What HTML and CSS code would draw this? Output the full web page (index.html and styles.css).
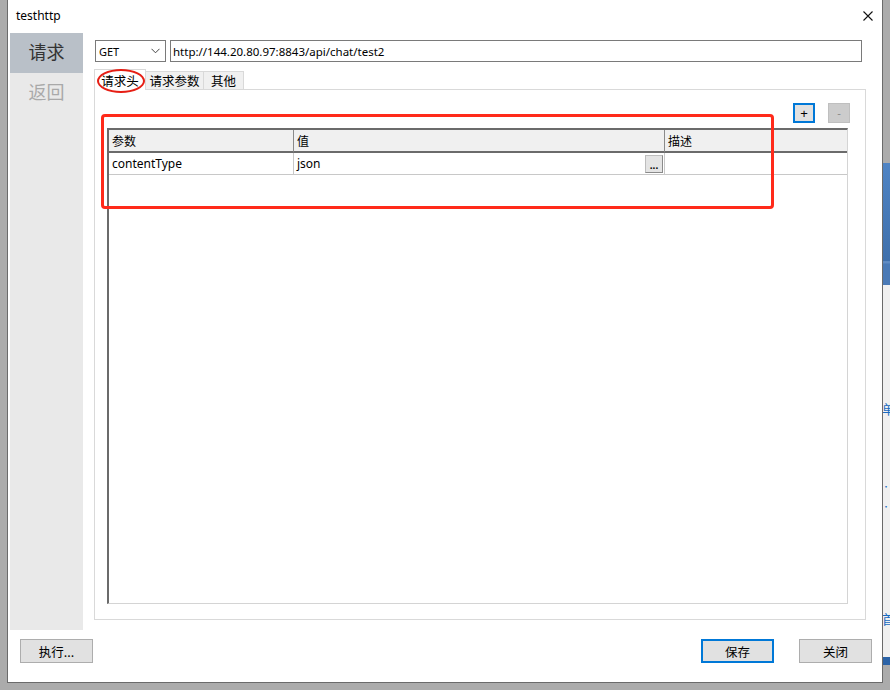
FILE: index.html
```html
<!DOCTYPE html>
<html lang="zh-CN">
<head>
    <meta charset="UTF-8">
    <meta name="viewport" content="width=device-width, initial-scale=1.0">
    <title>testhttp</title>
    <link rel="stylesheet" href="styles.css">
</head>
<body>
    <div class="desk-left"></div>

    <div class="window">
        <div class="titlebar">
            <span class="title">testhttp</span>
            <svg class="close" width="10" height="10" viewBox="0 0 10 10">
                <path d="M0.5 0.5 L9.5 9.5 M9.5 0.5 L0.5 9.5" stroke="#111" stroke-width="1.1" fill="none"/>
            </svg>
        </div>

        <div class="content">
            <div class="sidebar">
                <div class="side-item active">请求</div>
                <div class="side-item">返回</div>
            </div>

            <div class="main">
                <div class="toolbar">
                    <div class="method">
                        <span>GET</span>
                        <svg width="9" height="6" viewBox="0 0 9 6">
                            <path d="M0.5 0.8 L4.5 4.8 L8.5 0.8" stroke="#444" stroke-width="1" fill="none"/>
                        </svg>
                    </div>
                    <div class="url">http://144.20.80.97:8843/api/chat/test2</div>
                </div>

                <div class="tabs">
                    <div class="tab selected">请求头</div>
                    <div class="tab">请求参数</div>
                    <div class="tab">其他</div>
                </div>

                <div class="panel">
                    <div class="row-tools">
                        <button class="small focus">+</button>
                        <button class="small off">-</button>
                    </div>
                    <div class="grid">
                        <div class="cell head">参数</div>
                        <div class="cell head">值</div>
                        <div class="cell head">描述</div>
                        <div class="cell">contentType</div>
                        <div class="cell value">json<span class="dots">...</span></div>
                        <div class="cell"></div>
                    </div>
                </div>
            </div>
        </div>

        <div class="footer">
            <button class="btn">执行...</button>
            <div class="spacer"></div>
            <button class="btn primary">保存</button>
            <button class="btn">关闭</button>
        </div>
    </div>

    <div class="desk-right">
        <div class="dr-gray"></div>
        <div class="dr-blue"></div>
        <div class="dr-light">
            <span class="g1">单</span>
            <span class="g2">·</span>
            <span class="g3">·</span>
            <span class="g4">首</span>
        </div>
        <div class="dr-band"></div>
    </div>

    <div class="mark-ellipse"></div>
    <div class="mark-rect"></div>
</body>
</html>
```

FILE: styles.css
```css
* {
    box-sizing: border-box;
}
body {
    margin: 0;
    width: 890px;
    height: 690px;
    background-color: #ababab;
    display: flex;
    align-items: flex-start;
    position: relative;
    overflow: hidden;
    font-family: "Noto Sans", "Noto Sans CJK SC", sans-serif;
    font-size: 12px;
    color: #000;
}
.desk-left {
    width: 7px;
}
.window {
    width: 876px;
    height: 683px;
    background-color: #fff;
    border-left: 1px solid #6a6a6a;
    border-right: 1px solid #6a6a6a;
    border-bottom: 1px solid #6a6a6a;
    display: flex;
    flex-direction: column;
}
.titlebar {
    height: 33px;
    display: flex;
    align-items: center;
    padding: 0 9px 0 8px;
}
.title {
    flex: 1;
    font-size: 12px;
    padding-bottom: 2px;
}
.close {
    margin-top: -2px;
}
.content {
    height: 597px;
    display: flex;
}
.sidebar {
    margin-left: 2px;
    width: 73px;
    background-color: #e9e9e9;
}
.side-item {
    height: 40px;
    display: flex;
    align-items: center;
    justify-content: center;
    padding-bottom: 4px;
    font-family: "Noto Sans CJK SC", sans-serif;
    font-size: 18px;
    color: #a9a9a9;
}
.side-item.active {
    background-color: #b9c0c8;
    color: #333;
}
.main {
    margin-left: 11px;
    width: 772px;
    padding-top: 7px;
}
.toolbar {
    height: 22px;
    display: flex;
    gap: 4px;
}
.method {
    margin-left: 1px;
    width: 71px;
    border: 1px solid #7a7a7a;
    display: flex;
    align-items: center;
    justify-content: space-between;
    padding: 0 5px 0 3px;
    font-size: 11px;
}
.url {
    width: 692px;
    border: 1px solid #7a7a7a;
    display: flex;
    align-items: center;
    padding-left: 2px;
    font-size: 11.5px;
}
.tabs {
    margin-top: 7px;
    height: 20px;
    display: flex;
    align-items: flex-end;
    position: relative;
    z-index: 1;
}
.tab {
    height: 18px;
    border: 1px solid #d9d9d9;
    border-bottom: none;
    background-color: #f0f0f0;
    display: flex;
    align-items: center;
    justify-content: center;
    font-family: "Noto Sans CJK SC", sans-serif;
    font-size: 12.5px;
    margin-left: -1px;
}
.tab:nth-child(1) { width: 52px; margin-left: 0; }
.tab:nth-child(2) { width: 59px; }
.tab:nth-child(3) { width: 41px; }
.tab.selected {
    height: 21px;
    margin-bottom: -1px;
    background-color: #fff;
    position: relative;
    z-index: 1;
}
.panel {
    height: 531px;
    border: 1px solid #d9d9d9;
    padding: 13px 15px 0 12px;
}
.row-tools {
    height: 20px;
    display: flex;
    justify-content: flex-end;
    gap: 13px;
}
.small {
    width: 22px;
    height: 20px;
    padding: 0;
    font-family: "Liberation Sans", sans-serif;
    font-size: 13px;
    line-height: 1;
}
.small.focus {
    background-color: #e1e1e1;
    border: 2px solid #0078d7;
    color: #000;
}
.small.off {
    background-color: #cccccc;
    border: 1px solid #bfbfbf;
    color: #8a8a8a;
    font-size: 11px;
}
.grid {
    margin-top: 5px;
    width: 741px;
    height: 476px;
    border-top: 2px solid #6b6b6b;
    border-left: 2px solid #6b6b6b;
    border-right: 1px solid #d4d4d4;
    border-bottom: 1px solid #d4d4d4;
    display: grid;
    grid-template-columns: 185px 371px 182px;
    grid-template-rows: 23px 22px;
    align-content: start;
}
.cell {
    border-right: 1px solid #c8c8c8;
    border-bottom: 1px solid #c8c8c8;
    display: flex;
    align-items: center;
    padding-left: 3px;
    font-size: 12px;
}
.cell.head {
    background-color: #f0f0f0;
    border-right: 1px solid #8a8a8a;
    border-bottom: 2px solid #6b6b6b;
    font-family: "Noto Sans CJK SC", sans-serif;
}
.cell:nth-child(3n) {
    border-right: none;
}
.value {
    justify-content: space-between;
    padding-right: 1px;
}
.dots {
    width: 18px;
    height: 18px;
    background-color: #e4e4e4;
    border: 1px solid #bdbdbd;
    border-right-color: #8a8a8a;
    border-bottom-color: #8a8a8a;
    display: flex;
    align-items: flex-end;
    justify-content: center;
    font-size: 10px;
    line-height: 14px;
    font-weight: bold;
}
.footer {
    height: 52px;
    display: flex;
    padding: 9px 10px 0 12px;
    gap: 25px;
}
.spacer {
    flex: 1;
}
.btn {
    width: 73px;
    height: 24px;
    background-color: #e1e1e1;
    border: 1px solid #adadad;
    font-family: "Noto Sans CJK SC", sans-serif;
    font-size: 12.5px;
    padding: 0;
    color: #000;
}
.btn.primary {
    border: 2px solid #0078d7;
}
.desk-right {
    width: 7px;
    height: 690px;
    display: flex;
    flex-direction: column;
    overflow: hidden;
}
.dr-gray {
    height: 163px;
    background-color: #ababab;
}
.dr-blue {
    height: 122px;
    background: linear-gradient(#4f84c4, #3f70ac 80%, #6a94c8 81%, #4a7ab6 83%, #4a7ab6);
}
.dr-light {
    height: 372px;
    background-color: #f0f0f0;
    position: relative;
    color: #1a6bc0;
    font-family: "Noto Sans CJK SC", sans-serif;
    font-size: 13px;
}
.dr-light span {
    position: absolute;
    left: -1px;
    line-height: 1;
}
.g1 { top: 117px; }
.g2 { top: 198px; font-size: 8px; }
.g3 { top: 218px; font-size: 8px; }
.g4 { top: 327px; }
.dr-band {
    height: 8px;
    background-color: #2b63a7;
}
.mark-ellipse {
    position: absolute;
    z-index: 5;
    left: 97px;
    top: 69px;
    width: 48px;
    height: 24px;
    border: 2.5px solid #e61e14;
    border-radius: 50%;
}
.mark-rect {
    position: absolute;
    z-index: 5;
    left: 101px;
    top: 114px;
    width: 673px;
    height: 95px;
    border: 3px solid #ff2a1a;
    border-radius: 4px;
}
```
